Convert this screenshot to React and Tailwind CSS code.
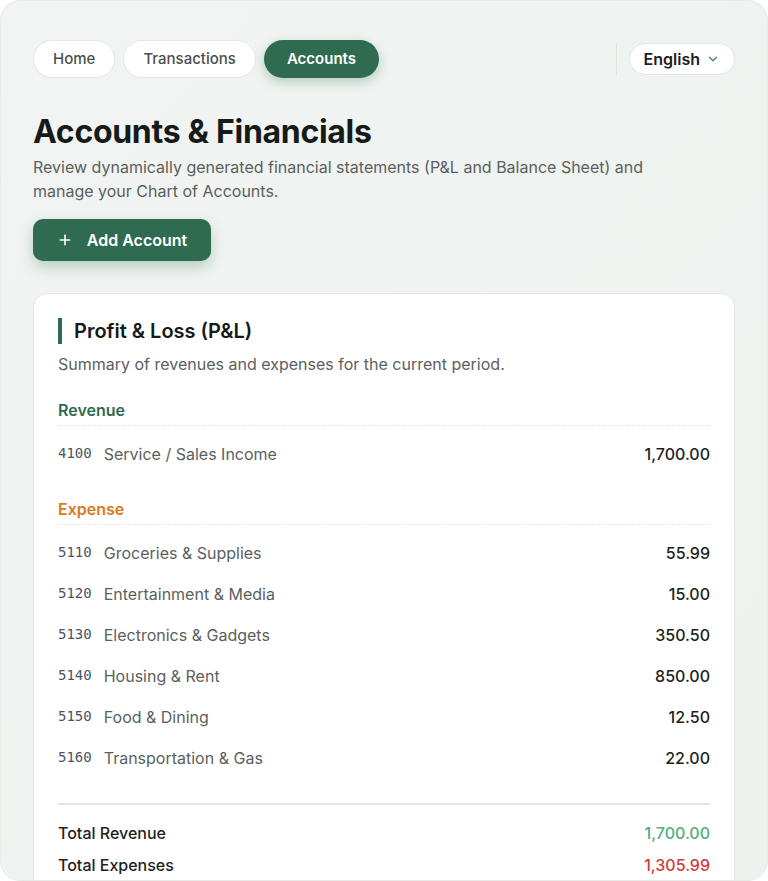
import { ChevronDown, Plus } from 'lucide-react'

const expenses = [
  { code: '5110', name: 'Groceries & Supplies', amount: '55.99' },
  { code: '5120', name: 'Entertainment & Media', amount: '15.00' },
  { code: '5130', name: 'Electronics & Gadgets', amount: '350.50' },
  { code: '5140', name: 'Housing & Rent', amount: '850.00' },
  { code: '5150', name: 'Food & Dining', amount: '12.50' },
  { code: '5160', name: 'Transportation & Gas', amount: '22.00' },
]

function Row({ code, name, amount }) {
  return (
    <div className="flex items-center justify-between h-[41px]">
      <div className="flex items-center gap-3">
        <span className="text-[14px] text-gray-600" style={{ fontFamily: '"DejaVu Sans Mono", monospace' }}>{code}</span>
        <span className="text-[16px] text-[#5b5f5d]">{name}</span>
      </div>
      <span className="text-[16px] font-medium text-[#1c1f1d]">{amount}</span>
    </div>
  )
}

export default function App() {
  return (
    <div className="bg-white" style={{ fontFamily: 'Inter, "Noto Sans", sans-serif' }}>
      <div className="h-[881px] overflow-hidden rounded-[20px] border border-[#e6ebe8] bg-gradient-to-br from-[#f1f4f2] to-[#edf2ef] px-8 pt-[39px]">
        {/* nav */}
        <div className="flex items-center justify-between">
          <div className="flex items-center gap-2">
            <button className="h-[38px] px-[19px] rounded-full bg-white border border-[#e3e7e4] text-[15px] font-medium text-[#4b504d]">Home</button>
            <button className="h-[38px] px-[19px] rounded-full bg-white border border-[#e3e7e4] text-[15px] font-medium text-[#4b504d]">Transactions</button>
            <button className="h-[38px] px-[23px] rounded-full bg-[#2f6b50] text-[15px] font-semibold text-white shadow-[0_4px_12px_rgba(47,107,80,0.3)]">Accounts</button>
          </div>
          <div className="flex items-center gap-3">
            <div className="w-px h-8 bg-[#dfe3e0]" />
            <button className="h-8 px-[14px] rounded-full bg-white border border-[#e3e7e4] flex items-center gap-[6px] text-[16px] font-semibold text-[#1d201e]">
              English
              <ChevronDown className="w-[14px] h-[14px] text-[#3f8a66]" strokeWidth={2.2} />
            </button>
          </div>
        </div>

        {/* header */}
        <h1 className="mt-[36px] text-[32px] leading-[36px] font-bold text-[#161a18] tracking-[-0.3px]">Accounts &amp; Financials</h1>
        <p className="mt-[5px] text-[16px] leading-[24px] text-[#5b605d] max-w-[660px]">
          Review dynamically generated financial statements (P&amp;L and Balance Sheet) and manage your Chart of Accounts.
        </p>
        <button className="mt-[16px] h-[42px] w-[178px] rounded-[10px] bg-[#2f6b50] text-white flex items-center justify-center gap-[14px] text-[16px] font-semibold shadow-[0_6px_14px_rgba(47,107,80,0.28)]">
          <Plus className="w-[16px] h-[16px]" strokeWidth={2.4} />
          Add Account
        </button>

        {/* P&L card */}
        <div className="mt-[32px] rounded-[14px] bg-white border border-[#e3e7e4] px-6 pt-6 pb-6">
          <div className="flex items-center gap-3 h-[26px]">
            <div className="w-[4px] h-[26px] bg-[#2f6b50]" />
            <h2 className="text-[20px] font-semibold text-[#161a18]">Profit &amp; Loss (P&amp;L)</h2>
          </div>
          <p className="mt-[8px] text-[16px] text-[#5b605d]">Summary of revenues and expenses for the current period.</p>

          <div className="mt-[22px] pb-[3px] border-b border-dashed border-[#e3e6e4] text-[16px] font-semibold text-[#2f6b50]">Revenue</div>
          <div className="mt-[7px]">
            <Row code="4100" name="Service / Sales Income" amount="1,700.00" />
          </div>

          <div className="mt-[23px] pb-[3px] border-b border-dashed border-[#e3e6e4] text-[16px] font-semibold text-[#d97a1f]">Expense</div>
          <div className="mt-[7px]">
            {expenses.map(e => <Row key={e.code} {...e} />)}
          </div>

          <div className="mt-[25px] border-t-2 border-[#e2e6e3] pt-[12px]">
            <div className="flex items-center justify-between h-[32px]">
              <span className="text-[16px] font-medium text-[#1c1f1d]">Total Revenue</span>
              <span className="text-[16px] font-medium text-[#4fae7f]">1,700.00</span>
            </div>
            <div className="flex items-center justify-between h-[32px]">
              <span className="text-[16px] font-medium text-[#1c1f1d]">Total Expenses</span>
              <span className="text-[16px] font-medium text-[#d13b3b]">1,305.99</span>
            </div>
          </div>
        </div>
      </div>
    </div>
  )
}
